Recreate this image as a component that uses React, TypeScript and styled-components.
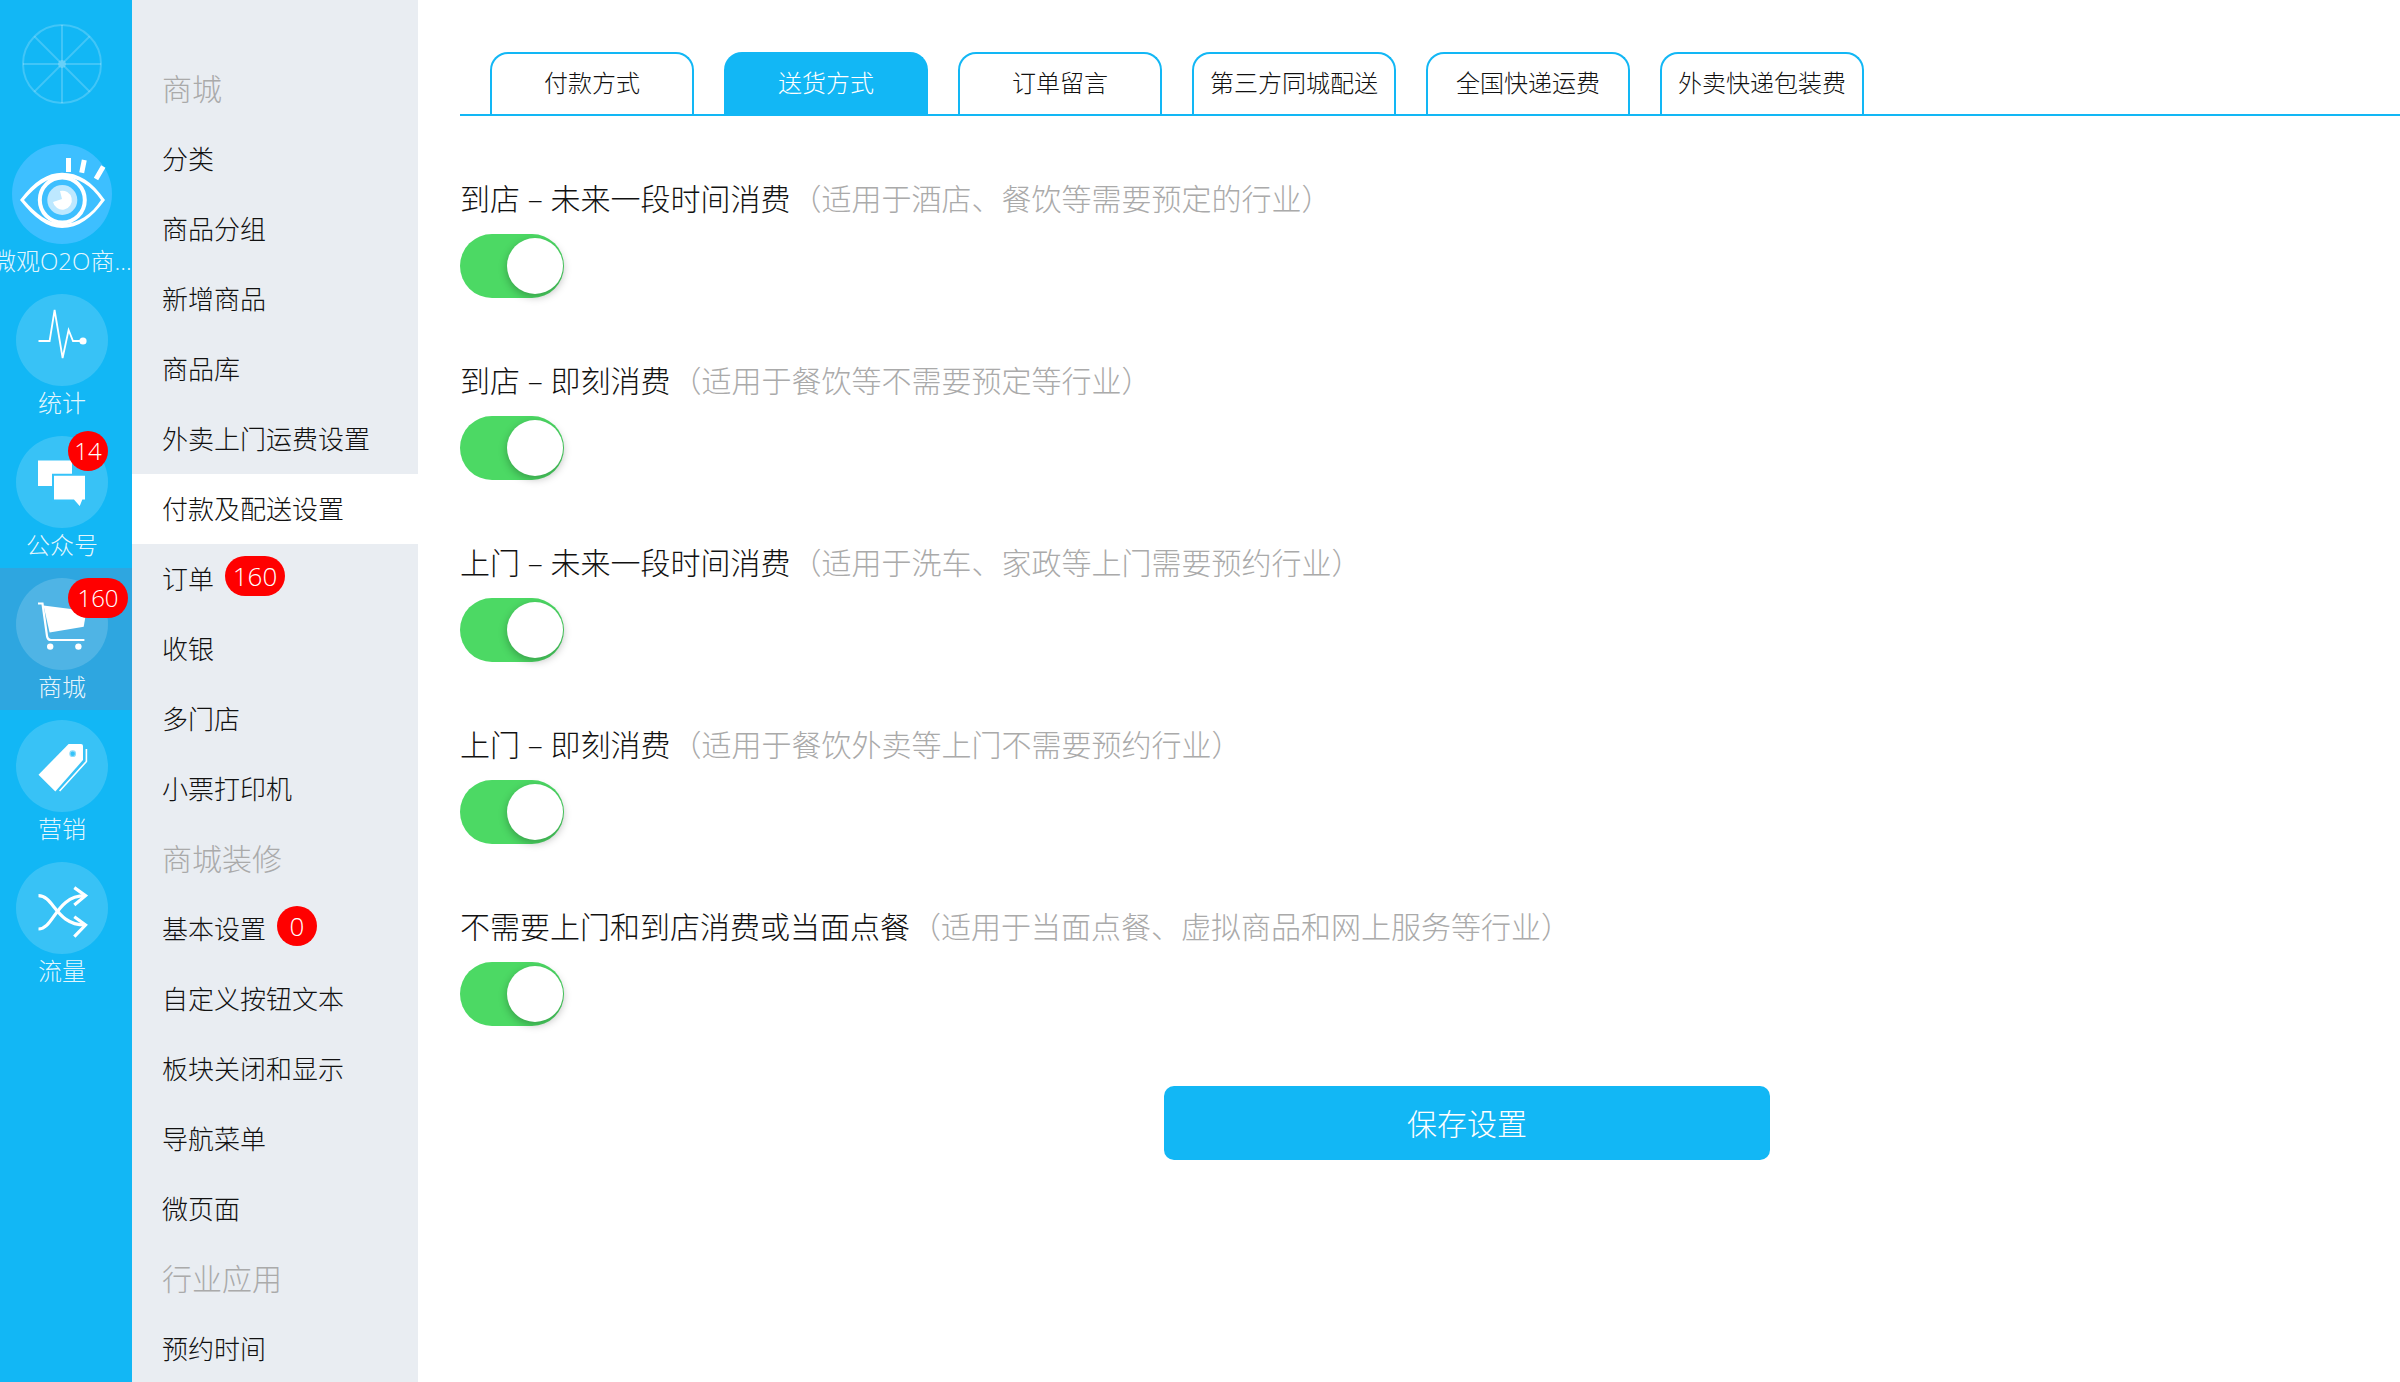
import { createGlobalStyle } from "styled-components";
import styled from "styled-components";

const GlobalStyle = createGlobalStyle`
  html, body {
    margin: 0;
    padding: 0;
    height: 100%;
    background: #fff;
  }
  body {
    font-family: "Open Sans", "Noto Sans CJK SC", sans-serif;
    font-weight: 300;
    overflow: hidden;
  }
  * {
    box-sizing: border-box;
  }
`;

const Page = styled.div`
  display: flex;
  width: 2400px;
  height: 1382px;
  overflow: hidden;
`;

const Rail = styled.nav`
  width: 132px;
  flex-shrink: 0;
  background-color: #12b7f5;
  overflow: hidden;
`;

const LogoBox = styled.div`
  height: 144px;
  padding: 24px 8px 0 0;
  display: flex;
  justify-content: center;
`;

const ShopItem = styled.div`
  height: 140px;
  padding-right: 8px;
  display: flex;
  flex-direction: column;
  align-items: center;
`;

const ShopCircle = styled.div`
  width: 100px;
  height: 100px;
  border-radius: 50%;
  background-color: #3dbfff;
`;

const RailItem = styled.div<{ $active?: boolean }>`
  height: 142px;
  padding: 10px 8px 0 0;
  display: flex;
  flex-direction: column;
  align-items: center;
  background-color: ${(props) => (props.$active ? "#2ea6e0" : "transparent")};
`;

const IconCircle = styled.div`
  position: relative;
  width: 92px;
  height: 92px;
  border-radius: 50%;
  background-color: rgba(255, 255, 255, 0.16);
`;

const RailLabel = styled.div`
  flex-shrink: 0;
  width: 140px;
  height: 34px;
  line-height: 34px;
  font-size: 24px;
  color: rgba(255, 255, 255, 0.9);
  text-align: center;
  white-space: nowrap;
  overflow: hidden;
  text-overflow: ellipsis;
`;

const RailBadge = styled.span<{ $wide?: boolean }>`
  position: absolute;
  top: ${(props) => (props.$wide ? "0" : "-5px")};
  left: 52px;
  width: ${(props) => (props.$wide ? "60px" : "40px")};
  height: 40px;
  line-height: 40px;
  border-radius: 20px;
  background-color: #f00;
  color: #fff;
  font-size: 24px;
  text-align: center;
`;

const SubMenu = styled.aside`
  width: 286px;
  flex-shrink: 0;
  padding-top: 54px;
  background-color: #e9edf2;
`;

const GroupTitle = styled.div`
  height: 70px;
  line-height: 69px;
  padding-left: 30px;
  font-size: 30px;
  color: #aaa;
`;

const MenuRow = styled.div<{ $active?: boolean }>`
  display: flex;
  align-items: center;
  height: 70px;
  padding: 0 0 2px 30px;
  font-size: 26px;
  color: #111;
  background-color: ${(props) => (props.$active ? "#fff" : "transparent")};
`;

const MenuBadge = styled.span<{ $wide?: boolean }>`
  width: ${(props) => (props.$wide ? "60px" : "40px")};
  height: 40px;
  line-height: 40px;
  margin: -4px 0 0 11px;
  border-radius: 20px;
  background-color: #f00;
  color: #fff;
  font-size: 26px;
  text-align: center;
`;

const Main = styled.main`
  flex: 1;
  padding: 52px 0 0 42px;
`;

const TabBar = styled.div`
  display: flex;
  gap: 30px;
  height: 64px;
  padding-left: 30px;
  border-bottom: 2px solid #12b7f5;
`;

const Tab = styled.div<{ $active?: boolean }>`
  width: 204px;
  height: 62px;
  line-height: 57px;
  font-size: 24px;
  text-align: center;
  border: 2px solid #12b7f5;
  border-bottom: 0;
  border-radius: 18px 18px 0 0;
  color: ${(props) => (props.$active ? "#fff" : "#111")};
  background-color: ${(props) => (props.$active ? "#12b7f5" : "#fff")};
`;

const Form = styled.div`
  padding-top: 61px;
  display: flex;
  flex-direction: column;
  gap: 61px;
`;

const Field = styled.div`
  display: flex;
  flex-direction: column;
  gap: 13px;
`;

const FieldLabel = styled.div`
  height: 44px;
  line-height: 44px;
  font-size: 30px;
  color: #111;
  white-space: nowrap;
`;

const Hint = styled.span`
  margin-left: 1px;
  color: #aaa;
`;

const Switch = styled.div`
  display: flex;
  justify-content: flex-end;
  align-items: center;
  width: 104px;
  height: 64px;
  padding-right: 1px;
  border-radius: 32px;
  background-color: #4cd964;
`;

const Knob = styled.span`
  width: 56px;
  height: 56px;
  border-radius: 50%;
  background-color: #fff;
  box-shadow: 0 3px 9px rgba(0, 0, 0, 0.28);
`;

const SaveButton = styled.button`
  display: block;
  width: 606px;
  height: 74px;
  margin: -1px 0 0 704px;
  padding: 0 0 2px;
  border: 0;
  border-radius: 10px;
  background-color: #12b7f5;
  color: #fff;
  font-family: inherit;
  font-weight: 300;
  font-size: 30px;
`;

const IconSvg = styled.svg`
  display: block;
`;

const WheelLogo = () => (
  <IconSvg width="80" height="80" viewBox="0 0 80 80" fill="none" stroke="rgba(255,255,255,0.2)" strokeWidth="2">
    <circle cx="40" cy="40" r="39" />
    <path d="M40 1V79M1 40H79M12.4 12.4L67.6 67.6M67.6 12.4L12.4 67.6" />
    <circle cx="40" cy="40" r="4" fill="rgba(255,255,255,0.2)" stroke="none" />
  </IconSvg>
);

const EyeIcon = () => (
  <IconSvg width="100" height="100" viewBox="0 0 100 100">
    <path
      fillRule="evenodd"
      fill="#fff"
      d="M8 56C22 37 36 28.7 50 28.7C66 28.7 80 37 93 56C80 74 66 84 50 84C36 84 22 74 8 56ZM12 56C24 70 36 79 50 80C66 80 80 70 89 56C80 42 66 33 50 33C36 33 24 42 12 56Z"
    />
    <circle cx="50.3" cy="56" r="22.5" fill="none" stroke="#fff" strokeWidth="4" />
    <circle cx="50.3" cy="56" r="15" fill="#bde8ff" />
    <path d="M48 47A9.5 9.5 0 1 1 41 58L50 55Z" fill="#fff" />
    <path d="M56.5 14V28M72.3 16L69.7 28.7M91.3 22.6L84 35" stroke="#fff" strokeWidth="5" fill="none" />
  </IconSvg>
);

const PulseIcon = () => (
  <IconSvg width="92" height="92" viewBox="0 0 92 92">
    <path
      d="M22.5 47H33.6L38.6 16L46.6 64L52.6 36L57 47H64.4"
      fill="none"
      stroke="#fff"
      strokeWidth="1.8"
    />
    <circle cx="67" cy="47" r="3.6" fill="#fff" />
  </IconSvg>
);

const ChatIcon = () => (
  <IconSvg width="92" height="92" viewBox="0 0 92 92">
    <path d="M22 24.6H56V50H22Z" fill="#fff" />
    <path d="M37 38.7H70V64.4H67L64 72L57.5 64.4H37Z" fill="#fff" stroke="#36c3f9" strokeWidth="2" />
  </IconSvg>
);

const CartIcon = () => (
  <IconSvg width="92" height="92" viewBox="0 0 92 92">
    <path d="M27.5 27.6L70.4 33L67.7 48.7L33.6 54.4Z" fill="#fff" />
    <path d="M22 25.5H26.5L31 58Q31.5 62 35 62H68.4" fill="none" stroke="#fff" strokeWidth="2.2" />
    <circle cx="34.2" cy="68.6" r="3.2" fill="#fff" />
    <circle cx="62.4" cy="68.6" r="3.2" fill="#fff" />
  </IconSvg>
);

const TagIcon = () => (
  <IconSvg width="92" height="92" viewBox="0 0 92 92">
    <path d="M22.5 54.7L52.6 24H65Q67 24 67 26V40L39.3 71.6Z" fill="#fff" />
    <path d="M70.4 29V41.5L43.6 71" fill="none" stroke="#fff" strokeWidth="1.6" />
    <circle cx="56.7" cy="33.7" r="2.8" fill="#36c3f9" stroke="#8fdcfa" strokeWidth="1.2" />
  </IconSvg>
);

const ShuffleIcon = () => (
  <IconSvg width="92" height="92" viewBox="0 0 92 92" fill="none" stroke="#fff" strokeWidth="3.2">
    <path d="M22.5 33.7C38 33.7 40 63 69 63" />
    <path d="M22.5 67C38 67 40 33.7 69 33.7" />
    <path d="M58.3 25.6L69.5 33.7L58.3 43" />
    <path d="M58.3 54.7L69.5 63L58.3 74.6" />
  </IconSvg>
);

const railItems = [
  { name: "统计", icon: <PulseIcon /> },
  { name: "公众号", icon: <ChatIcon />, badge: "14" },
  { name: "商城", icon: <CartIcon />, badge: "160", wide: true, active: true },
  { name: "营销", icon: <TagIcon /> },
  { name: "流量", icon: <ShuffleIcon /> },
];

type MenuEntry = { text: string; title?: boolean; active?: boolean; badge?: string };

const menuEntries: MenuEntry[] = [
  { text: "商城", title: true },
  { text: "分类" },
  { text: "商品分组" },
  { text: "新增商品" },
  { text: "商品库" },
  { text: "外卖上门运费设置" },
  { text: "付款及配送设置", active: true },
  { text: "订单", badge: "160" },
  { text: "收银" },
  { text: "多门店" },
  { text: "小票打印机" },
  { text: "商城装修", title: true },
  { text: "基本设置", badge: "0" },
  { text: "自定义按钮文本" },
  { text: "板块关闭和显示" },
  { text: "导航菜单" },
  { text: "微页面" },
  { text: "行业应用", title: true },
  { text: "预约时间" },
];

const tabs = ["付款方式", "送货方式", "订单留言", "第三方同城配送", "全国快递运费", "外卖快递包装费"];

const fields = [
  { label: "到店 – 未来一段时间消费", hint: "（适用于酒店、餐饮等需要预定的行业）" },
  { label: "到店 – 即刻消费", hint: "（适用于餐饮等不需要预定等行业）" },
  { label: "上门 – 未来一段时间消费", hint: "（适用于洗车、家政等上门需要预约行业）" },
  { label: "上门 – 即刻消费", hint: "（适用于餐饮外卖等上门不需要预约行业）" },
  { label: "不需要上门和到店消费或当面点餐", hint: "（适用于当面点餐、虚拟商品和网上服务等行业）" },
];

function App() {
  return (
    <Page>
      <GlobalStyle />
      <Rail>
        <LogoBox>
          <WheelLogo />
        </LogoBox>
        <ShopItem>
          <ShopCircle>
            <EyeIcon />
          </ShopCircle>
          <RailLabel>微观O2O商城管理</RailLabel>
        </ShopItem>
        {railItems.map((item) => (
          <RailItem key={item.name} $active={item.active}>
            <IconCircle>
              {item.icon}
              {item.badge && <RailBadge $wide={item.wide}>{item.badge}</RailBadge>}
            </IconCircle>
            <RailLabel>{item.name}</RailLabel>
          </RailItem>
        ))}
      </Rail>
      <SubMenu>
        {menuEntries.map((entry) =>
          entry.title ? (
            <GroupTitle key={entry.text}>{entry.text}</GroupTitle>
          ) : (
            <MenuRow key={entry.text} $active={entry.active}>
              {entry.text}
              {entry.badge && <MenuBadge $wide={entry.badge.length > 1}>{entry.badge}</MenuBadge>}
            </MenuRow>
          )
        )}
      </SubMenu>
      <Main>
        <TabBar>
          {tabs.map((tab, i) => (
            <Tab key={tab} $active={i === 1}>
              {tab}
            </Tab>
          ))}
        </TabBar>
        <Form>
          {fields.map((field) => (
            <Field key={field.label}>
              <FieldLabel>
                {field.label}
                <Hint>{field.hint}</Hint>
              </FieldLabel>
              <Switch>
                <Knob />
              </Switch>
            </Field>
          ))}
          <SaveButton>保存设置</SaveButton>
        </Form>
      </Main>
    </Page>
  );
}

export default App;
